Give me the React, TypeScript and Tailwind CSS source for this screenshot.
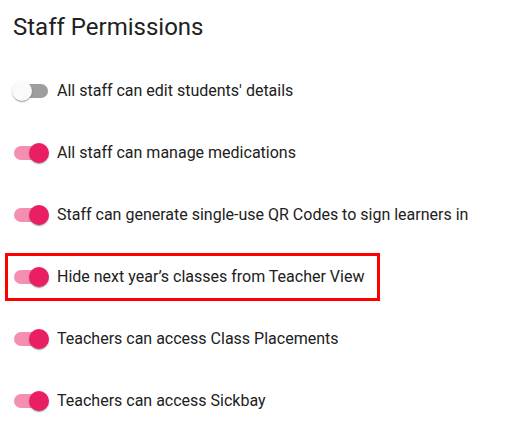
import React, { useState } from 'react';

interface Permission {
  label: string;
  enabled: boolean;
  highlight?: boolean;
}

const initial: Permission[] = [
  { label: "All staff can edit students' details", enabled: false },
  { label: 'All staff can manage medications', enabled: true },
  { label: 'Staff can generate single-use QR Codes to sign learners in', enabled: true },
  { label: 'Hide next year\u2019s classes from Teacher View', enabled: true, highlight: true },
  { label: 'Teachers can access Class Placements', enabled: true },
  { label: 'Teachers can access Sickbay', enabled: true },
];

const Toggle: React.FC<{ on: boolean; onClick: () => void }> = ({ on, onClick }) => (
  <button type="button" onClick={onClick} className="relative w-[40px] h-[20px] shrink-0">
    <span
      className={`absolute left-[3px] top-[3px] w-[34px] h-[14px] rounded-full ${
        on ? 'bg-[#f48fb1]' : 'bg-[#9e9e9e]'
      }`}
    />
    <span
      className={`absolute top-0 w-[20px] h-[20px] rounded-full shadow-[0_2px_1px_-1px_rgba(0,0,0,0.2),0_1px_1px_0_rgba(0,0,0,0.14),0_1px_3px_0_rgba(0,0,0,0.12)] ${
        on ? 'left-[18px] bg-[#e91e63]' : 'left-[1px] bg-[#fafafa]'
      }`}
    />
  </button>
);

export default function App() {
  const [items, setItems] = useState(initial);

  const toggle = (i: number) =>
    setItems(prev => prev.map((p, j) => (j === i ? { ...p, enabled: !p.enabled } : p)));

  return (
    <div className="w-[507px] h-[436px] bg-white font-['Roboto',sans-serif] text-[#212121]">
      <h1 className="pl-[13px] pt-[11px] h-[60px] text-[24px] leading-[32px] font-normal">Staff Permissions</h1>
      <div className="flex flex-col">
        {items.map((p, i) => (
          <div key={i} className="h-[62px] flex items-center pl-[5px]">
            <div
              className={`flex items-center gap-[6px] h-[48px] ${
                p.highlight ? 'w-[375px] border-[3px] border-[#ff0000] pl-[3px]' : 'pl-[6px]'
              }`}
            >
              <Toggle on={p.enabled} onClick={() => toggle(i)} />
              <span className="text-[16px] leading-[24px]">{p.label}</span>
            </div>
          </div>
        ))}
      </div>
    </div>
  );
}
